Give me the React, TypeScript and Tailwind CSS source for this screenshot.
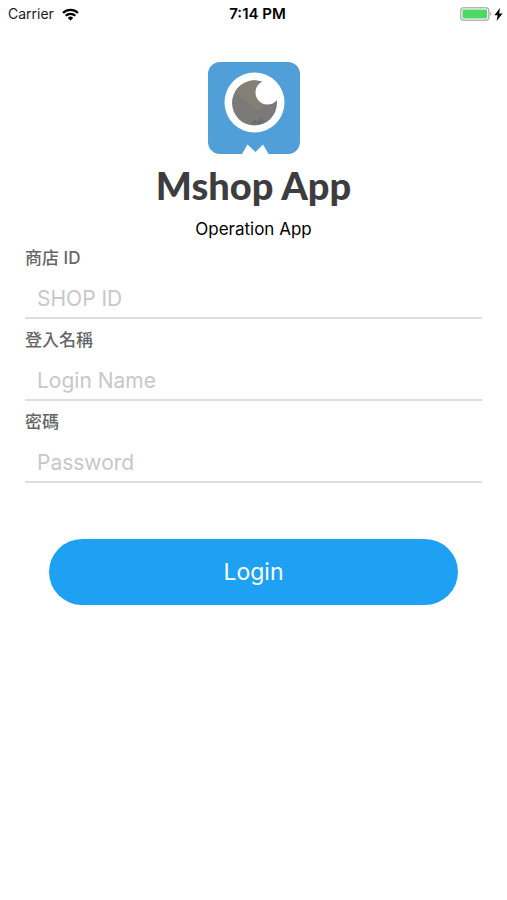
import React from "react";

const fields = [
  { id: "shop", label: "商店 ID", placeholder: "SHOP ID", type: "text" },
  { id: "login", label: "登入名稱", placeholder: "Login Name", type: "text" },
  { id: "password", label: "密碼", placeholder: "Password", type: "password" },
];

const StatusBar = () => {
  return (
    <div className="grid h-7 grid-cols-3 items-center pr-1 pl-2 text-sm text-[#1c1c1c]">
      <div className="flex items-center gap-2">
        <span>Carrier</span>
        <svg width="17" height="13" viewBox="0 0 17 13" fill="none" stroke="#000" strokeWidth="2.3">
          <path d="M1 4.9a10.7 10.7 0 0 1 15 0" />
          <path d="M3.7 7.8a6.8 6.8 0 0 1 9.6 0" />
          <path d="M8.5 12.6 5.8 9.9a3.8 3.8 0 0 1 5.4 0Z" fill="#000" stroke="none" />
        </svg>
      </div>
      <span className="pl-1 text-center text-[15px] font-semibold text-black">7:14 PM</span>
      <div className="flex items-center justify-end gap-0.5">
        <svg width="32" height="14" viewBox="0 0 32 14">
          <rect x="0.75" y="0.75" width="28" height="12.5" rx="3" fill="#fff" stroke="#b5b5b5" strokeWidth="1.5" />
          <rect x="2.5" y="2.5" width="24.5" height="9" rx="1" fill="#4cd964" />
          <path d="M30 4.8c1.6.6 1.6 3.8 0 4.4Z" fill="#b5b5b5" />
        </svg>
        <svg width="9" height="13" viewBox="0 0 8 12">
          <path d="M5.4 0 0.2 6.6h3L2.2 12 7.8 5.1H4.6Z" fill="#000" />
        </svg>
      </div>
    </div>
  );
};

const Logo = () => {
  return (
    <svg width="92" height="92" viewBox="0 0 92 92" role="img" aria-label="Mshop logo">
      <path
        d="M12 0h68a12 12 0 0 1 12 12v68a12 12 0 0 1-12 12H60.5L55 82.5 47.5 90 39.500 82.5 34 92H12A12 12 0 0 1 0 80V12A12 12 0 0 1 12 0Z"
        fill="#519fd8"
      />
      <circle cx="46.5" cy="40.5" r="30" fill="#fff" />
      <circle cx="46.5" cy="41" r="22.5" fill="#7b7a78" />
      <path d="M27 30A22.5 22.5 0 0 1 55 20L52 38 60 41 51 49Z" fill="#858077" />
      <path d="M43 62l4-6 1 4 7-5-2 4 5-1-5 4Z" fill="#6c6c6b" />
      <circle cx="59.5" cy="30.5" r="12" fill="#fff" />
    </svg>
  );
};

const App = () => {
  return (
    <div className="min-h-screen bg-white font-['Inter','Noto_Sans_CJK_TC',sans-serif]">
      <StatusBar />
      <main className="px-[25px]">
        <header className="flex flex-col items-center pt-[34px]">
          <Logo />
          <h1 className="mt-[7px] font-['Lato',sans-serif] text-[38px] leading-12 font-black text-[#3d3d3f]">
            Mshop App
          </h1>
          <p className="mt-2 text-[17px] leading-6 text-black">Operation App</p>
        </header>
        <form className="mt-[5px]">
          <div className="flex flex-col gap-[9px]">
            {fields.map((field) => (
              <div key={field.id} className="flex flex-col gap-[9px]">
                <label htmlFor={field.id} className="text-[17px] leading-6 font-medium text-[#666]">
                  {field.label}
                </label>
                <input
                  id={field.id}
                  type={field.type}
                  placeholder={field.placeholder}
                  className="h-10 w-full border-b-2 border-[#dedede] px-3 text-[21px] text-gray-700 outline-none placeholder:text-[#c7c7cb]"
                />
              </div>
            ))}
          </div>
          <div className="mt-14 px-6">
            <button type="button" className="h-[66px] w-full rounded-full bg-[#1fa1f3] text-[23px] text-white">
              Login
            </button>
          </div>
        </form>
      </main>
    </div>
  );
};

export default App;
